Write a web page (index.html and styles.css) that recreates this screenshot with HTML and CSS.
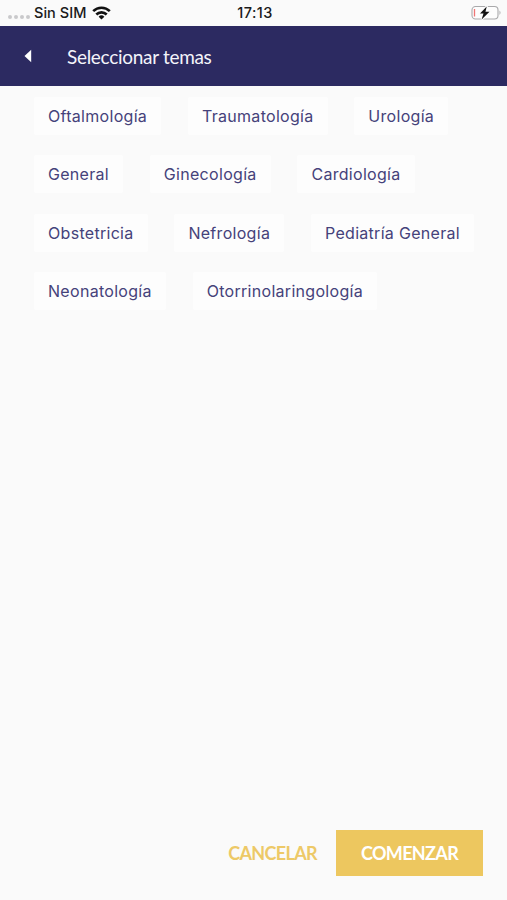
FILE: index.html
```html
<!DOCTYPE html>
<html lang="es">
<head>
<meta charset="utf-8">
<title>Seleccionar temas</title>
<link rel="stylesheet" href="styles.css">
</head>
<body>
<div class="screen">
  <div class="status">
    <div class="carrier">
      <span class="dots"><i></i><i></i><i></i><i></i></span>
      <span class="sim">Sin SIM</span>
      <svg class="wifi" width="19" height="14" viewBox="0 0 19 14"><g fill="none" stroke="#111" stroke-width="2.6"><path d="M1.2 5.1a11.8 11.8 0 0 1 16.6 0"/><path d="M4.3 8.5a7.4 7.4 0 0 1 10.4 0"/></g><path d="M9.5 13.6 6.6 10.7a4.1 4.1 0 0 1 5.8 0z" fill="#111"/></svg>
    </div>
    <span class="time">17:13</span>
    <svg class="battery" width="31" height="16" viewBox="0 0 31 16"><rect x="1" y="1.5" width="26" height="12.5" rx="3.5" fill="#fdfdfd" stroke="#a9a9ab" stroke-width="1.1"/><path d="M28.5 5.5q2 2.200 0 4.500z" fill="#a9a9ab"/><path d="M3.500 4v7.500" stroke="#ef7474" stroke-width="1.300"/><path d="M15.700 1.500 9 8.600h3.500L10.600 14.500 18.500 6.800h-4z" fill="#111" stroke="#fafafa" stroke-width="2.200" paint-order="stroke"/></svg>
  </div>
  <header class="bar">
    <svg class="back" width="8" height="14" viewBox="0 0 8 14"><path d="M7.200 .8v12.400L.5 7z" fill="#fff"/></svg>
    <h1>Seleccionar temas</h1>
  </header>
  <main class="topics">
    <button class="chip">Oftalmología</button>
    <button class="chip">Traumatología</button>
    <button class="chip">Urología</button>
    <button class="chip">General</button>
    <button class="chip">Ginecología</button>
    <button class="chip">Cardiología</button>
    <button class="chip">Obstetricia</button>
    <button class="chip">Nefrología</button>
    <button class="chip">Pediatría General</button>
    <button class="chip">Neonatología</button>
    <button class="chip">Otorrinolaringología</button>
  </main>
  <footer class="actions">
    <button class="cancel">CANCELAR</button>
    <button class="start">COMENZAR</button>
  </footer>
</div>
</body>
</html>
```
FILE: styles.css
```css
* { box-sizing: border-box; }
body { margin: 0; background: #fafafa; }
button { border: 0; background: none; padding: 0; margin: 0; white-space: nowrap; }
.screen { height: 900px; display: flex; flex-direction: column; }
.status {
  height: 26px;
  padding: 0 5px 0 8px;
  display: grid;
  grid-template-columns: 1fr auto 1fr;
  align-items: center;
  font: 500 14.5px/26px Inter, sans-serif;
  color: #1b1b1b;
}
.carrier { display: flex; align-items: center; }
.dots { display: flex; gap: 2px; width: 26px; padding-top: 8px; }
.dots i { width: 4px; height: 4px; border-radius: 50%; background: #c9c9cb; }
.sim { width: 58px; letter-spacing: 0.05px; }
.time { letter-spacing: 0.4px; }
.battery { justify-self: end; }
.bar {
  height: 60px;
  background: #2c2a61;
  display: flex;
  align-items: center;
  padding: 2px 0 0 24px;
}
.back { margin-right: 35px; margin-top: -2px; }
h1 { margin: 0; font: 400 19px/24px Lato, sans-serif; letter-spacing: -0.3px; color: #f4f4fa; }
.topics {
  flex: 1;
  display: flex;
  flex-wrap: wrap;
  align-content: flex-start;
  gap: 20.600px 26.800px;
  padding: 10.600px 20px 0 34px;
}
.chip {
  height: 38px;
  padding: 0 14px;
  background: #fdfdfd;
  border-radius: 2px;
  font: 400 16px/38px Inter, sans-serif;
  letter-spacing: 0.3px;
  color: #45427a;
}
.actions {
  display: flex;
  justify-content: flex-end;
  align-items: center;
  gap: 19px;
  padding: 0 24px 24px 0;
}
.actions button { height: 46px; font: 700 18px/47px Lato, sans-serif; letter-spacing: -0.65px; }
.actions .cancel { color: #edc967; }
.actions .start { width: 147px; background: #edc75f; color: #fff; }
```
